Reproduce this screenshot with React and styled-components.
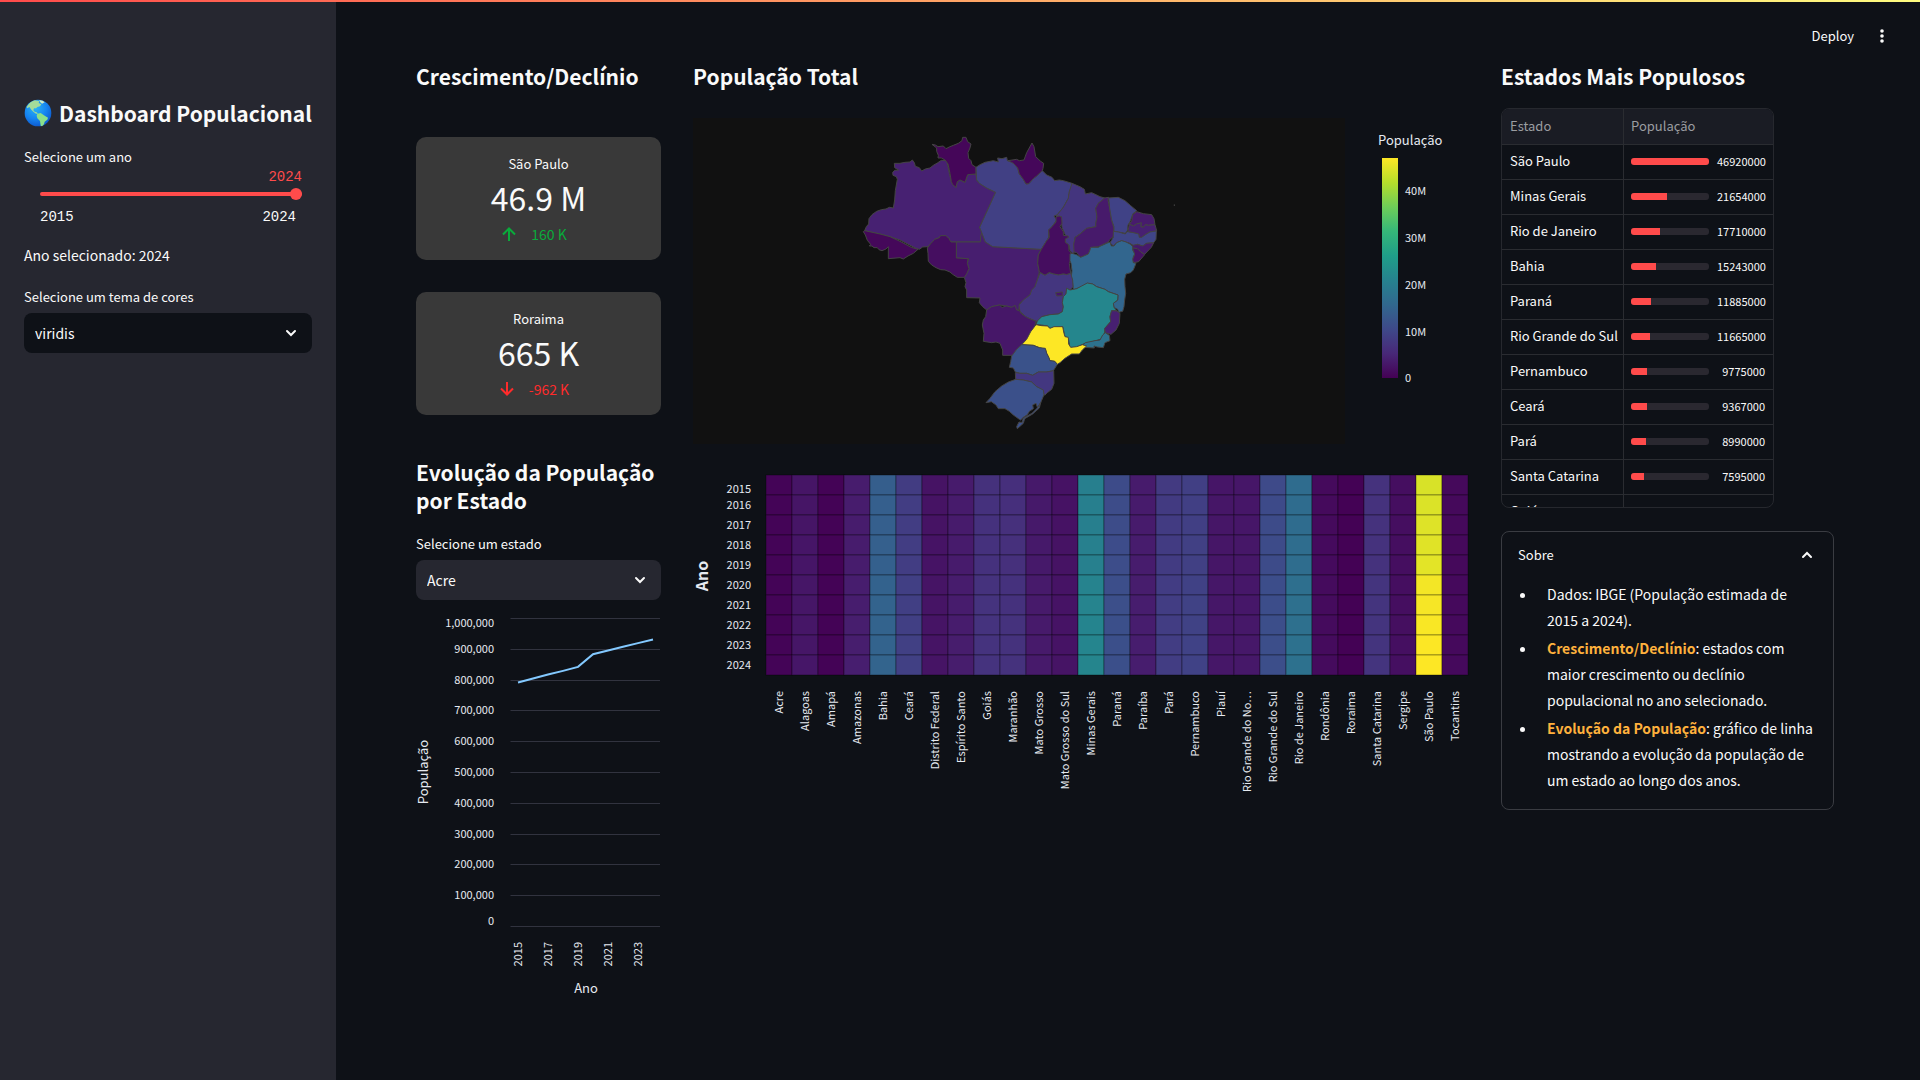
import React from "react";
import styled, { createGlobalStyle } from "styled-components";

const sans = '"Noto Sans CJK SC", "Noto Sans", sans-serif';

const GlobalStyle = createGlobalStyle`
  *, *::before, *::after { box-sizing: border-box; }
  body {
    margin: 0;
    background: #0e1117;
    color: #fafafa;
    font-family: ${sans};
    font-size: 14px;
    line-height: 26px;
  }
  button, select, input { font: inherit; color: inherit; }
`;

/* ---------- data ---------- */

const STOPS = [
  [68, 1, 84], [72, 40, 120], [62, 73, 137], [49, 104, 142], [38, 130, 142],
  [31, 158, 137], [53, 183, 121], [110, 206, 88], [181, 222, 43], [253, 231, 37],
];

function viridis(value) {
  const p = Math.max(0, Math.min(1, value)) * (STOPS.length - 1);
  const i = Math.min(STOPS.length - 2, Math.floor(p));
  const c = STOPS[i].map((a, k) => Math.round(a + (STOPS[i + 1][k] - a) * (p - i)));
  return `rgb(${c.join(",")})`;
}

const MAX = 46.92;
const MIN = 0.5;

const POPULATION = {
  Acre: 0.93, Alagoas: 3.3, Amapá: 0.81, Amazonas: 4.3, Bahia: 15.243, Ceará: 9.367,
  "Distrito Federal": 3.0, "Espírito Santo": 4.15, Goiás: 7.41, Maranhão: 7.2,
  "Mato Grosso": 3.85, "Mato Grosso do Sul": 2.95, "Minas Gerais": 21.654,
  Paraná: 11.885, Paraíba: 4.2, Pará: 8.99, Pernambuco: 9.775, Piauí: 3.4,
  "Rio Grande do Norte": 3.5, "Rio Grande do Sul": 11.665, "Rio de Janeiro": 17.71,
  Rondônia: 1.8, Roraima: 0.665, "Santa Catarina": 7.595, Sergipe: 2.3,
  "São Paulo": 46.92, Tocantins: 1.6,
};

const YEARS = [2015, 2016, 2017, 2018, 2019, 2020, 2021, 2022, 2023, 2024];
const YEAR_FACTOR = [0.944, 0.948, 0.952, 0.956, 0.96, 0.985, 0.99, 0.994, 0.998, 1];

const TOP_STATES = [
  ["São Paulo", 46920000], ["Minas Gerais", 21654000], ["Rio de Janeiro", 17710000],
  ["Bahia", 15243000], ["Paraná", 11885000], ["Rio Grande do Sul", 11665000],
  ["Pernambuco", 9775000], ["Ceará", 9367000], ["Pará", 8990000],
  ["Santa Catarina", 7595000], ["Goiás", 7410000],
];

const STATE_SHAPES = [
  ["Amazonas", "M133,130 150,130 165,127 180,126 187,120 193,128 196,139 208,143 215,153 226,147 240,144 250,136 262,129 274,121 290,122 294,140 298,160 304,185 318,202 322,185 330,180 345,187 353,164 378,162 380,180 388,190 410,204 437,217 389,322 395,335 391,366 300,366 297,356 288,347 272,347 268,353 254,358 242,371 234,380 218,381 208,388 196,384 150,360 120,350 90,342 44,332 49,320 56,312 57,296 66,284 80,274 94,269 108,267 118,262 130,264 134,240 136,212 142,178 139,170 129,166 128,157 134,151 146,150 134,143Z"],
  ["Acre", "M40,335 44,332 90,342 120,350 150,364 184,382 204,388 190,400 174,408 160,417 150,413 115,416 115,380 108,387 96,392 87,389 82,383 72,383 66,378 58,378 62,373 52,361 46,345Z"],
  ["Mato Grosso", "M391,366 393,343 400,340 400,350 406,366 428,380 574,388 565,405 563,430 568,456 562,480 555,500 540,525 510,550 506,570 492,572 497,558 485,562 470,558 448,555 425,560 410,570 398,560 388,548 390,534 350,533 350,510 345,500 348,488 343,472 357,446 352,430 356,416 319,414 319,366Z"],
  ["Rondônia", "M232,384 242,371 254,358 268,353 272,347 288,347 297,356 303,366 319,366 319,414 354,416 352,430 357,446 350,462 343,472 322,472 308,463 300,456 285,450 272,449 258,443 245,435 235,424 234,400Z"],
  ["Roraima", "M246,73 256,75 264,80 280,78 288,86 300,80 310,76 325,70 336,62 338,52 348,52 353,65 363,72 360,84 354,98 356,115 363,122 366,134 378,142 378,162 353,164 345,187 330,180 322,185 318,202 308,194 304,185 300,160 294,132 285,120 274,114 264,114 265,106 260,94 260,84Z"],
  ["Pará", "M378,142 390,134 405,127 430,122 445,126 443,114 456,116 470,112 472,122 490,126 503,144 508,162 520,178 528,192 536,191 550,176 577,152 590,165 606,172 614,182 628,180 640,182 666,190 664,200 658,215 655,235 640,262 622,284 612,288 620,300 606,320 596,330 596,352 574,388 428,380 406,366 389,322 437,217 410,204 388,190 380,180Z"],
  ["Amapá", "M474,122 500,118 508,122 522,120 530,98 546,69 552,80 557,110 572,124 581,130 579,145 577,152 560,168 550,176 536,191 528,192 520,178 508,162 503,144 490,130Z"],
  ["Maranhão", "M666,190 680,196 690,200 703,208 706,222 725,218 738,224 750,230 764,234 745,250 737,265 741,290 737,312 738,320 710,325 690,342 675,352 672,372 674,396 668,400 660,392 657,375 646,368 646,345 636,322 634,290 618,288 622,284 640,262 655,235 658,215Z"],
  ["Tocantins", "M618,290 628,288 635,292 636,310 630,320 640,335 640,346 655,348 656,352 646,357 646,367 656,374 657,392 666,402 664,415 658,430 662,460 650,464 640,462 625,465 610,462 598,458 585,466 568,456 563,430 565,405 574,388 588,365 598,352 596,330 606,320 618,306Z"],
  ["Piauí", "M764,234 776,232 774,240 780,270 785,300 792,325 790,350 780,358 775,366 745,380 725,382 715,402 692,412 685,404 680,398 672,396 671,372 676,352 690,342 710,325 738,320 737,312 741,290 737,265 745,250Z"],
  ["Ceará", "M776,234 805,232 825,242 842,257 860,272 848,282 845,292 840,305 834,315 832,332 826,340 805,336 792,334 792,320 785,300 779,265Z"],
  ["Rio Grande do Norte", "M860,275 880,281 905,284 912,296 915,314 895,316 886,314 880,322 872,320 874,310 860,312 850,318 838,312 845,303 848,284Z"],
  ["Paraíba", "M838,312 850,318 860,312 874,308 872,320 880,322 886,314 895,316 915,314 920,332 900,336 888,343 875,352 868,352 866,342 850,338 834,335Z"],
  ["Pernambuco", "M790,334 805,336 826,342 832,335 850,338 866,342 868,352 875,352 888,343 900,336 919,333 918,358 911,368 890,370 878,378 862,373 852,378 840,370 815,362 800,368 790,378 780,368 790,352Z"],
  ["Alagoas", "M848,376 862,373 878,378 890,370 911,368 904,382 884,403 872,396 862,386 848,384Z"],
  ["Sergipe", "M848,384 862,386 872,396 884,404 866,425 852,428 846,420 854,405Z"],
  ["Bahia", "M660,402 666,400 680,404 692,412 715,402 720,390 722,382 745,382 752,378 770,370 780,366 784,378 792,378 800,368 815,362 828,366 840,372 848,380 848,390 854,402 850,410 848,418 850,428 858,430 850,450 842,458 828,462 824,478 825,500 827,520 824,540 822,560 818,574 806,577 803,568 792,562 790,550 803,540 804,525 775,515 765,508 740,500 728,492 712,490 695,500 680,506 670,510 668,490 664,470 666,452 663,430 660,422Z"],
  ["Goiás", "M570,458 585,466 598,458 610,462 625,465 640,462 650,464 662,460 668,480 669,500 660,510 650,505 648,522 640,530 637,548 640,560 637,575 625,582 600,584 575,590 562,605 530,592 510,575 507,555 520,540 540,525 545,510 555,500 562,480Z"],
  ["Distrito Federal", "M617,518 637,516 637,527 620,528Z"],
  ["Mato Grosso do Sul", "M410,570 425,560 448,555 456,562 470,558 485,562 495,556 500,570 508,572 515,582 530,592 558,604 552,625 540,640 535,655 515,674 500,688 490,706 458,706 458,690 450,670 438,666 425,668 400,664 402,640 397,615 400,600 407,590Z"],
  ["Minas Gerais", "M650,505 660,510 680,506 695,498 712,489 728,492 740,500 765,508 775,515 804,525 803,540 790,550 792,562 800,572 785,572 780,590 782,605 765,625 764,638 752,658 730,664 700,672 680,682 660,684 655,655 645,650 638,620 600,625 592,618 575,615 558,614 562,603 575,590 600,584 625,582 637,575 640,560 637,548 640,530 648,522Z"],
  ["Espírito Santo", "M785,572 800,573 810,580 808,610 798,630 783,643 766,638 764,625 782,605 780,590Z"],
  ["Rio de Janeiro", "M766,638 778,646 780,662 765,668 760,683 742,681 732,678 733,684 700,682 697,676 706,668 735,662 750,660 758,645Z"],
  ["São Paulo", "M558,614 575,617 592,618 600,625 612,620 638,620 642,640 645,650 655,652 656,672 662,682 680,680 697,674 710,678 697,690 688,702 665,702 645,715 630,728 622,733 614,724 600,722 596,712 590,700 586,688 568,683 550,676 515,674 530,658 542,635Z"],
  ["Paraná", "M515,674 550,676 568,683 586,685 590,700 596,712 600,722 614,724 622,733 610,752 590,756 565,756 548,766 530,760 510,760 496,756 490,744 478,742 482,725 485,708 500,688Z"],
  ["Santa Catarina", "M496,758 510,760 530,760 548,766 565,756 590,756 611,752 612,790 605,808 592,818 584,826 576,810 560,800 545,786 520,780 497,778Z"],
  ["Rio Grande do Sul", "M497,778 520,780 545,786 560,800 580,810 582,824 572,848 562,862 558,850 548,855 550,866 538,874 532,884 520,892 512,900 508,898 490,885 478,874 465,866 445,866 438,855 424,845 408,848 420,835 435,815 455,798 475,786Z"],
  ["Rio Grande do Sul", "M572,848 568,864 548,882 524,896 520,910 502,926 500,920 507,906 516,908 520,894 546,880 562,864Z"],
];

const ACRE_SERIES = [792, 805, 818, 830, 843, 884, 896, 908, 920, 932];

/* ---------- page frame ---------- */

const Page = styled.div`
  display: flex;
  min-height: 100vh;
  border-top: 2px solid;
  border-image: linear-gradient(90deg, #ff4b4b, #fffd80) 1;
`;

const Sidebar = styled.aside`
  flex: 0 0 336px;
  min-width: 0;
  display: flex;
  flex-direction: column;
  padding: 95px 24px 24px;
  background: #262730;
`;

const Main = styled.main`
  flex: 1;
  min-width: 0;
`;

const TopBar = styled.header`
  display: flex;
  align-items: center;
  justify-content: flex-end;
  gap: 16px;
  height: 58px;
  padding: 10px 26px 0 0;
`;

const ToolButton = styled.button`
  display: inline-flex;
  align-items: center;
  justify-content: center;
  min-width: 24px;
  height: 32px;
  padding: 0;
  border: 0;
  background: none;
  font-size: 13px;
  cursor: pointer;
`;

const Columns = styled.div`
  display: grid;
  grid-template-columns: minmax(0, 245fr) minmax(0, 776fr) minmax(0, 333fr);
  gap: 32px;
  padding: 2px 86px 40px 80px;
`;

const Column = styled.section`
  display: flex;
  flex-direction: column;
`;

const Title = styled.h1`
  display: flex;
  align-items: center;
  gap: 7px;
  margin: 0 0 18px;
  font-size: 21px;
  font-weight: 600;
  line-height: 32px;
  white-space: nowrap;
`;

const Heading = styled.h2`
  margin: 0 0 ${(p) => p.$space}px;
  font-size: 21px;
  font-weight: 600;
  line-height: 28px;
`;

/* ---------- form controls ---------- */

const Label = styled.label`
  display: block;
  margin-bottom: ${(p) => p.$space || 0}px;
  font-size: 13px;
  line-height: 20px;
`;

const mono = '"Liberation Mono", monospace';

const SliderBox = styled.div`
  padding: 0 10px 0 16px;
  font-family: ${mono};
  line-height: 20px;
`;

const SliderValue = styled.output`
  display: block;
  color: #ff4b4b;
  text-align: right;
`;

const Range = styled.input`
  appearance: none;
  display: block;
  width: 100%;
  height: 12px;
  margin: 1px 0 7px;
  background: none;

  &::-webkit-slider-runnable-track {
    height: 4px;
    border-radius: 2px;
    background: #ff4b4b;
  }
  &::-webkit-slider-thumb {
    appearance: none;
    width: 12px;
    height: 12px;
    margin-top: -4px;
    border-radius: 50%;
    background: #ff4b4b;
  }
`;

const Ticks = styled.div`
  display: flex;
  justify-content: space-between;
  padding-right: 6px;
`;

const Note = styled.p`
  margin: 15px 0 19px;
`;

const SelectBox = styled.div`
  position: relative;

  svg {
    position: absolute;
    right: 15px;
    top: 16px;
    pointer-events: none;
  }
`;

const Select = styled.select`
  appearance: none;
  display: block;
  width: 100%;
  height: 40px;
  padding: 0 40px 0 11px;
  border: 0;
  border-radius: 8px;
  background: ${(p) => p.$fill};
`;

/* ---------- metrics ---------- */

const Cards = styled.div`
  display: grid;
  gap: 32px;
  margin-bottom: 43px;
`;

const Card = styled.article`
  display: flex;
  flex-direction: column;
  align-items: center;
  padding: 17px 16px 14px;
  border-radius: 10px;
  background: #393939;
`;

const CardName = styled.span`
  font-size: 13px;
  line-height: 20px;
`;

const CardValue = styled.strong`
  margin-bottom: 2px;
  font-size: 32px;
  font-weight: 400;
  line-height: 46px;
`;

const CardDelta = styled.span`
  display: flex;
  align-items: center;
  gap: 15px;
  padding-right: 8px;
  line-height: 24px;
  color: ${(p) => (p.$up ? "#09ab3b" : "#ff2b2b")};
`;

/* ---------- table ---------- */

const TableBox = styled.div`
  width: 273px;
  max-width: 100%;
  height: 400px;
  overflow: hidden;
  border: 1px solid #26282e;
  border-radius: 8px;
`;

const Table = styled.table`
  width: 100%;
  border-collapse: separate;
  border-spacing: 0;
  table-layout: fixed;
  font-size: 13px;
  line-height: 20px;

  th, td {
    height: 35px;
    padding: 0 8px 2px 7px;
    border-bottom: 1px solid #2a2c31;
    text-align: left;
    white-space: nowrap;
  }
  th { background: #1a1c24; color: #9b9da1; font-weight: 400; height: 36px; }
  th:first-child, td:first-child { width: 122px; padding-left: 8px; border-right: 1px solid #2a2c31; }
`;

const Meter = styled.div`
  display: flex;
  align-items: center;
  justify-content: space-between;
  gap: 8px;
  font-size: 11px;
`;

const Track = styled.div`
  flex: 0 0 78px;
  height: 7px;
  overflow: hidden;
  border-radius: 3px;
  background: #2a2830;
`;

const Fill = styled.div`
  height: 100%;
  background: #ff4b4b;
`;

/* ---------- expander ---------- */

const Expander = styled.details`
  margin-top: 23px;
  border: 1px solid #3a3c42;
  border-radius: 8px;
`;

const Summary = styled.summary`
  display: flex;
  align-items: center;
  justify-content: space-between;
  padding: 13px 20px 13px 16px;
  font-size: 13px;
  line-height: 20px;
  list-style: none;
`;

const Bullets = styled.ul`
  display: grid;
  gap: 2px;
  margin: 0;
  padding: 3px 14px 16px 35px;
  font-size: 14px;

  li { padding-left: 10px; }
  strong { color: #ffb13d; font-weight: 600; }
`;

/* ---------- charts ---------- */

const Chart = styled.svg`
  display: block;
  width: 100%;
  height: auto;
  margin-top: ${(p) => p.$space || 0}px;
  font-family: ${sans};
  font-size: 11px;
  fill: #e6eaf1;
`;

const Chevron = ({ up }) => (
  <svg width="12" height="8" viewBox="0 0 12 8" fill="none" stroke="#fafafa" strokeWidth="2" strokeLinecap="round" aria-hidden="true">
    <path d={up ? "M2,6 6,2 10,6" : "M2,2 6,6 10,2"} />
  </svg>
);

const Arrow = ({ up }) => (
  <svg width="14" height="14" viewBox="0 0 14 14" fill="none" stroke="currentColor" strokeWidth="2" aria-hidden="true">
    <path d={up ? "M7,14V1.5M1,7.5 7,1.5 13,7.5" : "M7,0V12.5M1,6.5 7,12.5 13,6.5"} />
  </svg>
);

const Globe = () => (
  <svg width="28" height="28" viewBox="0 0 84 84" aria-hidden="true">
    <defs>
      <radialGradient id="sea" cx="0.4" cy="0.3" r="0.7">
        <stop offset="0" stopColor="#29b6f6" />
        <stop offset="0.6" stopColor="#1684f0" />
        <stop offset="1" stopColor="#0d5cd0" />
      </radialGradient>
    </defs>
    <circle cx="42" cy="42" r="40" fill="url(#sea)" />
    <path fill="#a4dc9a" d="M8,24 Q18,8 32,4 L46,6 44,12 52,16 48,22 40,24 36,28 30,28 28,34 32,38 38,40 42,44 36,44 28,38 22,32 16,24 10,28Z" />
    <path fill="#8be08a" d="M40,44 50,42 62,50 72,56 70,62 62,68 60,76 54,82 50,80 48,66 40,58 38,50Z" />
    <path fill="#cdebc4" d="M46,3 56,5 62,10 54,14 48,9Z" />
  </svg>
);

function BrazilMap() {
  const ticks = [["40M", 191], ["30M", 238], ["20M", 285], ["10M", 332], ["0", 378]];
  return (
    <Chart viewBox="0 0 776 326" role="img" aria-label="População Total">
      <defs>
        <linearGradient id="scale" x1="0" y1="1" x2="0" y2="0">
          {STOPS.map((c, i) => (
            <stop key={i} offset={i / 9} stopColor={`rgb(${c.join(",")})`} />
          ))}
        </linearGradient>
      </defs>
      <rect width="652" height="326" fill="#111111" />
      <g transform="translate(157 2) scale(0.33333)" stroke="#444444" strokeWidth="3" strokeLinejoin="round">
        {STATE_SHAPES.map(([name, d], i) => (
          <path key={i} d={d} fill={viridis(POPULATION[name] / MAX)} />
        ))}
        <path d="M973,253V258" />
      </g>
      <text x="685" y="27" fontSize="13">População</text>
      <rect x="689" y="40" width="16" height="220" fill="url(#scale)" />
      {ticks.map(([t, y]) => (
        <text key={t} x="712" y={y - 114}>{t}</text>
      ))}
    </Chart>
  );
}

function Heatmap() {
  const names = Object.keys(POPULATION);
  return (
    <Chart $space={17} viewBox="0 0 776 350" role="img" aria-label="População por ano e estado">
      {YEARS.map((year, r) =>
        names.map((name, c) => (
          <rect
            key={name + year}
            x={73 + c * 26}
            y={14 + r * 20}
            width="26"
            height="20"
            fill={viridis((POPULATION[name] * YEAR_FACTOR[r] - MIN) / (MAX - MIN))}
            stroke="#000000"
            strokeOpacity="0.35"
          />
        ))
      )}
      {YEARS.map((year, r) => (
        <text key={year} x="58" y={r === 0 ? 32 : 28 + r * 20} textAnchor="end">{year}</text>
      ))}
      {names.map((name, c) => (
        <text key={name} textAnchor="end" transform={`translate(${90 + c * 26} 230) rotate(-90)`}>
          {name === "Rio Grande do Norte" ? "Rio Grande do No…" : name}
        </text>
      ))}
      <text textAnchor="middle" fontSize="16" fontWeight="700" transform="translate(15 115) rotate(-90)">Ano</text>
    </Chart>
  );
}

function LineChart() {
  const top = 8.5;
  const step = 30.8;
  const y = (v) => top + (1000 - v) * (step / 100);
  const points = ACRE_SERIES.map((v, i) => `${102 + i * 15},${y(v)}`).join(" ");
  return (
    <Chart $space={10} viewBox="0 0 245 390" role="img" aria-label="Evolução da População por Estado">
      {Array.from({ length: 11 }, (_, i) => {
        const line = Math.floor(top + i * step) + 0.5;
        const shift = i === 0 ? 8 : i === 10 ? -2 : 3;
        return (
          <g key={i}>
            <path d={`M94.5,${line}H244`} stroke="#31333f" />
            <text x="78" y={Math.round(line + shift)} textAnchor="end">
              {((10 - i) * 100000).toLocaleString("en-US")}
            </text>
          </g>
        );
      })}
      <polyline points={points} fill="none" stroke="#83c9ff" strokeWidth="2" />
      {[2015, 2017, 2019, 2021, 2023].map((t, i) => (
        <text key={t} textAnchor="end" transform={`translate(${106 + i * 30} 332) rotate(-90)`}>{t}</text>
      ))}
      <text x="170" y="383" textAnchor="middle" fontSize="13">Ano</text>
      <text textAnchor="middle" fontSize="13" transform="translate(12 162) rotate(-90)">População</text>
    </Chart>
  );
}

export default function App() {
  return (
    <>
      <GlobalStyle />
      <Page>
        <Sidebar>
          <Title><Globe />Dashboard Populacional</Title>
          <Label htmlFor="year">Selecione um ano</Label>
          <SliderBox>
            <SliderValue htmlFor="year">2024</SliderValue>
            <Range id="year" type="range" min="2015" max="2024" defaultValue="2024" />
            <Ticks><span>2015</span><span>2024</span></Ticks>
          </SliderBox>
          <Note>Ano selecionado: 2024</Note>
          <Label htmlFor="theme" $space={6}>Selecione um tema de cores</Label>
          <SelectBox>
            <Select id="theme" $fill="#0e1117"><option>viridis</option></Select>
            <Chevron />
          </SelectBox>
        </Sidebar>
        <Main>
          <TopBar>
            <ToolButton>Deploy</ToolButton>
            <ToolButton aria-label="Menu">
              <svg width="4" height="14" viewBox="0 0 4 14" fill="#fafafa" aria-hidden="true">
                <circle cx="2" cy="2" r="1.8" /><circle cx="2" cy="7" r="1.8" /><circle cx="2" cy="12" r="1.8" />
              </svg>
            </ToolButton>
          </TopBar>
          <Columns>
            <Column>
              <Heading $space={47}>Crescimento/Declínio</Heading>
              <Cards>
                <Card>
                  <CardName>São Paulo</CardName>
                  <CardValue>46.9 M</CardValue>
                  <CardDelta $up><Arrow up />160 K</CardDelta>
                </Card>
                <Card>
                  <CardName>Roraima</CardName>
                  <CardValue>665 K</CardValue>
                  <CardDelta><Arrow />-962 K</CardDelta>
                </Card>
              </Cards>
              <Heading $space={20}>Evolução da População por Estado</Heading>
              <Label htmlFor="state" $space={6}>Selecione um estado</Label>
              <SelectBox>
                <Select id="state" $fill="#262730"><option>Acre</option></Select>
                <Chevron />
              </SelectBox>
              <LineChart />
            </Column>
            <Column>
              <Heading $space={28}>População Total</Heading>
              <BrazilMap />
              <Heatmap />
            </Column>
            <Column>
              <Heading $space={18}>Estados Mais Populosos</Heading>
              <TableBox>
                <Table>
                  <thead><tr><th>Estado</th><th>População</th></tr></thead>
                  <tbody>
                    {TOP_STATES.map(([name, value]) => (
                      <tr key={name}>
                        <td>{name}</td>
                        <td>
                          <Meter>
                            <Track><Fill style={{ width: `${(value / 46920000) * 100}%` }} /></Track>
                            {value}
                          </Meter>
                        </td>
                      </tr>
                    ))}
                  </tbody>
                </Table>
              </TableBox>
              <Expander open>
                <Summary>Sobre<Chevron up /></Summary>
                <Bullets>
                  <li>Dados: IBGE (População estimada de 2015 a 2024).</li>
                  <li><strong>Crescimento/Declínio</strong>: estados com maior crescimento ou declínio populacional no ano selecionado.</li>
                  <li><strong>Evolução da População</strong>: gráfico de linha mostrando a evolução da população de um estado ao longo dos anos.</li>
                </Bullets>
              </Expander>
            </Column>
          </Columns>
        </Main>
      </Page>
    </>
  );
}
